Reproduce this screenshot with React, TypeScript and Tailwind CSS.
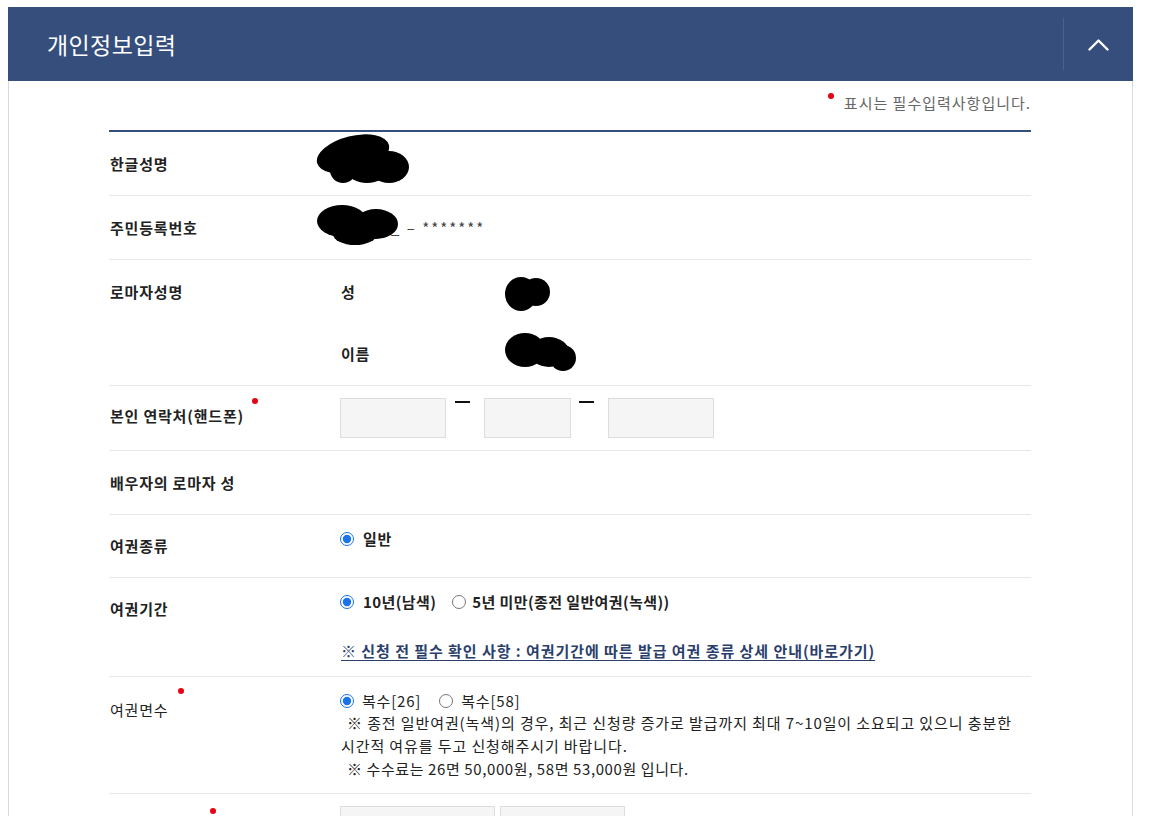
import type { ReactNode } from "react";

type Ellipse = { cx: number; cy: number; rx: number; ry: number; r?: number };

// black redaction scribbles drawn over the personal data
function Blob({ w, h, shapes, className }: { w: number; h: number; shapes: Ellipse[]; className: string }) {
  return (
    <svg width={w} height={h} viewBox={`0 0 ${w} ${h}`} className={className}>
      {shapes.map((s, i) => (
        <ellipse key={i} cx={s.cx} cy={s.cy} rx={s.rx} ry={s.ry} transform={s.r ? `rotate(${s.r} ${s.cx} ${s.cy})` : undefined} fill="#000" />
      ))}
    </svg>
  );
}

function Dot({ className }: { className: string }) {
  return <span className={`inline-block h-[6px] w-[6px] rounded-full bg-[#e50012] align-top ${className}`} />;
}

function Row({ h, labelPad, label, children }: { h: string; labelPad: string; label: ReactNode; children?: ReactNode }) {
  return (
    <div className={`flex border-b border-[#e8e8e8] ${h}`}>
      <div className={`w-[231px] shrink-0 pl-[1px] leading-[20px] font-bold text-[#222] ${labelPad}`}>{label}</div>
      <div className="relative flex-1">{children}</div>
    </div>
  );
}

function Radio({ checked, name }: { checked?: boolean; name: string }) {
  return (
    <input
      type="radio"
      name={name}
      defaultChecked={checked}
      className="m-0 h-[14px] w-[14px] shrink-0 accent-[#1a73e8]"
    />
  );
}

function PhoneBox({ w }: { w: string }) {
  return <input type="text" className={`h-[40px] ${w} border border-[#dddddd] bg-[#f5f5f5]`} />;
}

function Dash() {
  return <span className="mt-[3px] h-[2px] w-[15px] shrink-0 bg-[#111]" />;
}

export default function App() {
  return (
    <div className="min-h-screen bg-white pl-[8px] pt-[7px] font-['Noto_Sans_CJK_KR','Noto_Sans',sans-serif] text-[15px] tracking-[0.8px] text-[#222]">
      <div className="w-[1125px]">
        <header className="flex h-[74px] items-center bg-[#354e7b]">
          <h1 className="flex-1 pl-[39px] text-[23px] font-normal leading-none tracking-[0.4px] text-white">개인정보입력</h1>
          <div className="h-[52px] w-px bg-[#4a6290]" />
          <div className="flex w-[69px] justify-center">
            <svg width="21" height="13" viewBox="0 0 21 13" fill="none">
              <polyline points="1.5,11.5 10.5,2.5 19.5,11.5" stroke="#fff" strokeWidth="2.4" strokeLinecap="round" strokeLinejoin="round" />
            </svg>
          </div>
        </header>

        <div className="border-x border-[#d9d9d9] pb-[40px] pl-[100px]">
          <div className="w-[922px]">
            <div className="flex h-[51px] justify-end border-b-2 border-[#354e7b] pt-[12px]">
              <Dot className="mr-[10px] mt-0" />
              <p className="leading-[20px] tracking-[1px] text-[#666]">표시는 필수입력사항입니다.</p>
            </div>

            <Row h="h-[64px]" labelPad="pt-[22px]" label="한글성명">
              <Blob
                w={95}
                h={53}
                className="absolute left-[-25px] top-0"
                shapes={[
                  { cx: 38, cy: 22, rx: 37, ry: 18, r: -14 },
                  { cx: 28, cy: 38, rx: 13, ry: 13 },
                  { cx: 52, cy: 38, rx: 20, ry: 13 },
                  { cx: 74, cy: 35, rx: 20, ry: 16 },
                ]}
              />
            </Row>

            <Row h="h-[64px]" labelPad="pt-[22px]" label="주민등록번호">
              <div className="pl-[51px] pt-[22px] leading-[20px] text-[#444]">
                <span className="tracking-[2px]">_ – *******</span>
              </div>
              <Blob
                w={83}
                h={42}
                className="absolute left-[-23px] top-[8px]"
                shapes={[
                  { cx: 25, cy: 17, rx: 25, ry: 16 },
                  { cx: 59, cy: 20, rx: 22, ry: 15 },
                  { cx: 38, cy: 30, rx: 22, ry: 11 },
                ]}
              />
            </Row>

            <Row h="h-[126px]" labelPad="pt-[22px]" label="로마자성명">
              <div className="flex flex-col gap-[42px] pt-[22px] font-bold leading-[20px]">
                <div className="flex h-[20px] items-start">
                  <span className="w-[165px] pl-[1px]">성</span>
                  <Blob w={46} h={35} className="-mt-[6px]" shapes={[{ cx: 16, cy: 18, rx: 16, ry: 17 }, { cx: 31, cy: 16, rx: 14, ry: 14 }]} />
                </div>
                <div className="flex h-[20px] items-start">
                  <span className="w-[165px] pl-[1px]">이름</span>
                  <Blob
                    w={72}
                    h={40}
                    className="-mt-[12px]"
                    shapes={[
                      { cx: 20, cy: 18, rx: 20, ry: 17 },
                      { cx: 44, cy: 20, rx: 20, ry: 15 },
                      { cx: 58, cy: 26, rx: 13, ry: 13 },
                    ]}
                  />
                </div>
              </div>
            </Row>

            <Row
              h="h-[65px]"
              labelPad="pt-[20px]"
              label={
                <>
                  본인 연락처(핸드폰)
                  <Dot className="-mt-[8px] ml-[8px]" />
                </>
              }
            >
              <div className="flex items-start pt-[12px]">
                <PhoneBox w="w-[106px]" />
                <span className="ml-[9px] mr-[14px] flex">
                  <Dash />
                </span>
                <PhoneBox w="w-[87px]" />
                <span className="ml-[8px] mr-[14px] flex">
                  <Dash />
                </span>
                <PhoneBox w="w-[106px]" />
              </div>
            </Row>

            <Row h="h-[64px]" labelPad="pt-[22px]" label="배우자의 로마자 성" />

            <Row h="h-[63px]" labelPad="pt-[21px]" label="여권종류">
              <div className="mt-[14px] flex h-[20px] items-center gap-[9px] font-bold">
                <Radio name="type" checked />
                <span>일반</span>
              </div>
            </Row>

            <Row h="h-[99px]" labelPad="pt-[21px]" label="여권기간">
              <div className="mt-[14px] flex h-[20px] items-center font-bold tracking-[0.4px]">
                <Radio name="period" checked />
                <span className="ml-[9px]">10년(남색)</span>
                <span className="ml-[16px] flex">
                  <Radio name="period" />
                </span>
                <span className="ml-[6px]">5년 미만(종전 일반여권(녹색))</span>
              </div>
              <a href="#" className="mt-[29px] block pl-[1px] font-bold leading-[20px] tracking-[0.95px] text-[#2b3f6c] underline underline-offset-[3px]">
                ※ 신청 전 필수 확인 사항 : 여권기간에 따른 발급 여권 종류 상세 안내(바로가기)
              </a>
            </Row>

            <Row
              h="h-[117px]"
              labelPad="pt-[23px]"
              label={
                <span className="font-normal">
                  여권면수
                  <Dot className="-mt-[12px] ml-[10px]" />
                </span>
              }
            >
              <div className="mt-[14px] flex h-[20px] items-center">
                <Radio name="pages" checked />
                <span className="ml-[8px]">복수[26]</span>
                <span className="ml-[18px] flex">
                  <Radio name="pages" />
                </span>
                <span className="ml-[8px]">복수[58]</span>
              </div>
              <div className="whitespace-nowrap pl-[1px] leading-[23px] tracking-[0.9px]">
                <p className="pl-[6px]">※ 종전 일반여권(녹색)의 경우, 최근 신청량 증가로 발급까지 최대 7~10일이 소요되고 있으니 충분한</p>
                <p>시간적 여유를 두고 신청해주시기 바랍니다.</p>
                <p className="pl-[6px] tracking-[0.6px]">※ 수수료는 26면 50,000원, 58면 53,000원 입니다.</p>
              </div>
            </Row>

            <Row
              h="h-[70px]"
              labelPad="pt-[22px]"
              label={
                <>
                  <span className="inline-block w-[100px]" />
                  <Dot className="-mt-[8px]" />
                </>
              }
            >
              <div className="flex gap-[5px] pt-[12px]">
                <PhoneBox w="w-[155px]" />
                <PhoneBox w="w-[125px]" />
              </div>
            </Row>
          </div>
        </div>
      </div>
    </div>
  );
}
